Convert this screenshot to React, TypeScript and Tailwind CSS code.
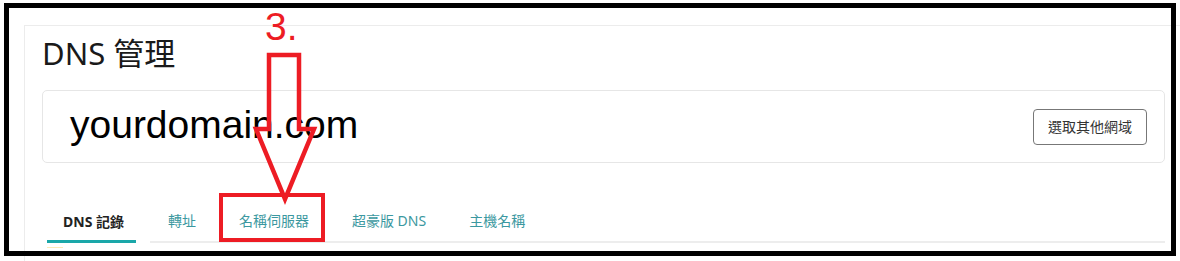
const TABS = ['轉址', '名稱伺服器', '超豪版 DNS', '主機名稱']

const SANS = "font-['Noto_Sans','Noto_Sans_CJK_TC',sans-serif]"

function DownArrow() {
  return (
    <svg
      className="absolute left-[250px] top-[50px]"
      width={70}
      height={156}
      viewBox="0 0 70 156"
      fill="none"
    >
      <polygon
        points="19,5 49,5 49,79 64,79 35,149 6,79 19,79"
        stroke="#ed1c24"
        strokeWidth="4.5"
        strokeLinejoin="miter"
      />
    </svg>
  )
}

export default function App() {
  return (
    <div className={`relative w-[1180px] h-[261px] overflow-hidden bg-white ${SANS}`}>
      {/* page underneath */}
      <div className="pl-[24px] pt-[25px]">
        <div className="w-[1160px] h-[260px] border-l border-t border-[#ececec] pl-[17px] pt-[7px]">
          <h1 className="text-[31px] leading-[40px] text-[#1a1a1a] font-normal">DNS 管理</h1>

          <div className="mt-[17px] w-[1123px] h-[73px] border border-[#e6e6e6] rounded-[5px] flex items-center justify-between pl-[27px] pr-[17px]">
            <span className="font-['Liberation_Sans',Arial,sans-serif] text-[39px] leading-[39px] pb-[4px] text-black">
              yourdomain.com
            </span>
            <button className="h-[36px] px-[14px] border border-[#777] rounded-[4px] text-[14px] text-[#333] bg-white">
              選取其他網域
            </button>
          </div>

          <div className="mt-[39px] w-[1123px] flex items-end">
            <div className="ml-[5px] flex flex-col">
              <div className="pl-[16px] pr-[12px] pt-[9px] pb-[8px] text-[14px] leading-[20px] font-bold text-[#222] border-b-[3px] border-[#1aa7a9]">
                DNS 記錄
              </div>
            </div>
            <div className="ml-[14px] flex-1 flex gap-[43px] pl-[18px] border-b-2 border-[#ededed]">
              {TABS.map((t) => (
                <div key={t} className="pt-[9px] pb-[10px] text-[14px] leading-[20px] text-[#3b98a0]">
                  {t}
                </div>
              ))}
            </div>
          </div>
          <div className="ml-[5px] mt-[4px] w-[16px] h-[1px] bg-[#fbeab8]" />
        </div>
      </div>

      {/* black frame */}
      <div className="pointer-events-none absolute left-[4px] top-[3px] w-[1172px] h-[253px] border-[5px] border-black" />

      {/* red annotations */}
      <span className="absolute left-[265px] top-[7px] font-['Liberation_Sans',Arial,sans-serif] text-[39px] leading-[39px] text-[#ed1c24]">
        3.
      </span>
      <DownArrow />
      <div className="absolute left-[219px] top-[193px] w-[106px] h-[49px] border-[4px] border-[#ed1c24]" />
    </div>
  )
}
